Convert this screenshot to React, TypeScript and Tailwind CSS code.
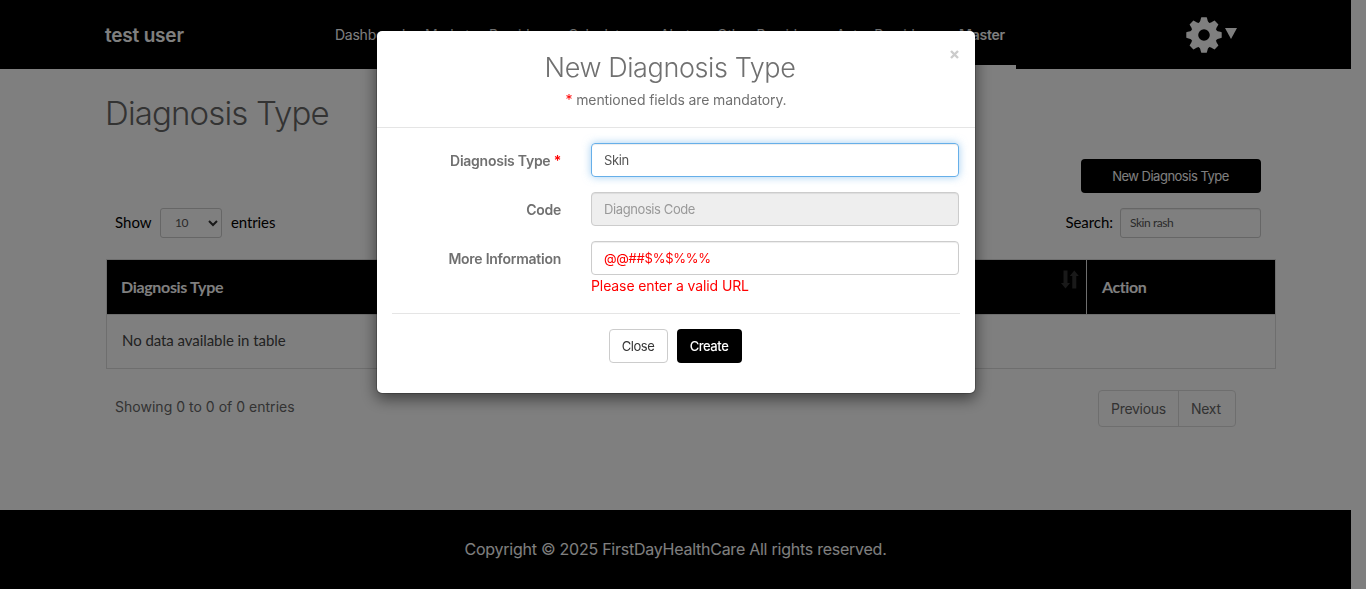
import React from 'react';

const navItems = [
  { label: 'Dashboard', width: 'w-[90px]' },
  { label: 'Market', width: 'w-[64px]' },
  { label: 'Providers', width: 'w-[79px]' },
  { label: 'Calculator', width: 'w-[92px]' },
  { label: 'Alerts', width: 'w-[57px]' },
  { label: 'Other Providers', width: 'w-[119px]' },
  { label: 'Actor Providers', width: 'w-[112px]' },
];

const teeth = [0, 45, 90, 135, 180, 225, 270, 315];

function Gear() {
  return (
    <svg viewBox="-18 -18 36 36" className="size-9 fill-white">
      <path fillRule="evenodd" d="M-13.2 0a13.2 13.2 0 1 0 26.4 0a13.2 13.2 0 1 0 -26.4 0zM-5.8 0a5.8 5.8 0 1 1 11.6 0a5.8 5.8 0 1 1 -11.6 0z" />
      {teeth.map((angle) => (
        <path key={angle} transform={`rotate(${angle})`} d="M-5 -12Q-3.6 -13.2 -3.2 -16.2L-2.7 -17.7H2.7L3.2 -16.2Q3.6 -13.2 5 -12z" />
      ))}
    </svg>
  );
}

function NavBar() {
  return (
    <header className="flex h-[69px] items-start bg-black pl-[105px] text-white">
      <div className="w-[230px] pt-[22px] text-[19px] leading-7 font-semibold tracking-[-0.2px]">test user</div>
      <nav className="flex text-[14px] font-normal tracking-[-0.25px]">
        {navItems.map((item) => (
          <a key={item.label} className={`${item.width} pt-[25px] leading-5 whitespace-nowrap`}>{item.label}</a>
        ))}
        <a className="h-[69px] w-[68px] border-b-4 border-white pt-[25px] pl-[11px] leading-5 font-semibold tracking-[-0.25px]">Master</a>
      </nav>
      <div className="ml-auto flex pt-[17px] pr-[114px]">
        <Gear />
        <svg viewBox="0 0 12 11" className="mt-[11px] ml-[3px] h-[11px] w-3 fill-white">
          <path d="M0 0H12L6 11z" />
        </svg>
      </div>
    </header>
  );
}

function SortIcon() {
  return (
    <svg viewBox="0 0 18 19" className="h-[19px] w-[18px] fill-[#333]">
      <path d="M2.5 0.5H6.5V13H9L4.5 18.5L0 13H2.5z" />
      <path d="M11.3 18.5H15.3V6H17.8L13.3 0.5L8.8 6H11.3z" />
    </svg>
  );
}

function TableArea() {
  return (
    <main className="flex h-[441px] flex-col text-[#666]">
      <h1 className="mt-[23px] pl-[105px] text-[33px] leading-[42px] font-light tracking-[-0.85px]">Diagnosis Type</h1>
      <div className="mt-[25px] flex justify-end pr-[90px]">
        <button className="h-[34px] w-[180px] rounded bg-black pt-[2px] pr-px text-[13px] font-normal tracking-[-0.5px] text-white">New Diagnosis Type</button>
      </div>
      <div className="mt-[15px] flex h-[30px] items-center pr-[90px] pl-[115px] font-[Lato,sans-serif] text-[15px] text-black">
        <span className="w-[45px] pb-[2px]">Show</span>
        <span className="flex h-[30px] w-[62px] items-center justify-between rounded-[3px] border border-[#ccc] pr-[3px] pl-[14px] text-[12px] tracking-[-0.5px] text-[#555]">
          10
          <svg viewBox="0 0 10 7" className="h-[7px] w-[10px] fill-none stroke-[#333] stroke-2">
            <path d="M1 1L5 5L9 1" />
          </svg>
        </span>
        <span className="ml-[9px] pb-[2px] tracking-[-0.1px]">entries</span>
        <span className="mr-[7px] ml-auto pb-[2px] tracking-[-0.05px]">Search:</span>
        <input defaultValue="Skin rash" className="h-[30px] w-[141px] rounded-[3px] border border-[#ccc] px-[9px] pb-[2px] text-[12px] tracking-[-0.45px] text-[#555] shadow-[inset_0_1px_1px_rgba(0,0,0,0.075)]" />
      </div>
      <div className="mt-[21px] ml-[106px] h-[110px] w-[1170px] border border-[#ddd] font-[Lato,sans-serif]">
        <div className="flex h-[54px] bg-black text-[16px] font-bold text-white">
          <div className="flex w-[980px] justify-between border-r border-[#ddd] pt-[10px] pr-[7px] pl-[14px]">
            <span className="pt-[5px] tracking-[-0.33px]">Diagnosis Type</span>
            <SortIcon />
          </div>
          <div className="pt-[15px] pl-[15px] tracking-[-0.4px]">Action</div>
        </div>
        <div className="border-t border-[#ddd] pt-[14px] pl-[15px] text-[15px] leading-[22px] tracking-[-0.06px] text-[#444]">No data available in table</div>
      </div>
      <div className="mt-[21px] flex justify-between pr-[115px] pl-[115px] text-[14px] font-normal">
        <span className="mt-[7px] leading-5 tracking-[0.02px]">Showing 0 to 0 of 0 entries</span>
        <div className="flex h-[37px] items-center rounded border border-[#ddd] tracking-[-0.3px]">
          <span className="flex h-full w-[80px] items-center border-r border-[#ddd] pl-3">Previous</span>
          <span className="w-[56px] pl-3">Next</span>
        </div>
      </div>
    </main>
  );
}

function Field({ label, children }: { label: React.ReactNode; children: React.ReactNode }) {
  return (
    <div className="mb-[15px] flex">
      <label className="w-[184px] pt-[8px] text-right text-[14px] leading-5 font-semibold tracking-[-0.25px]">{label}</label>
      <div className="ml-[30px] w-[368px]">{children}</div>
    </div>
  );
}

function DiagnosisDialog() {
  return (
    <section className="relative h-[364px] w-[600px] rounded-md border border-black/20 bg-white bg-clip-padding text-[#707070] shadow-[0_5px_15px_rgba(0,0,0,0.5)]">
      <button className="absolute top-[13px] right-[16px] text-[#ccc]" aria-label="Close">
        <svg viewBox="0 0 9 9" className="mt-[6px] size-[9px] fill-none stroke-current stroke-[2.4]">
          <path d="M1 1L8 8M8 1L1 8" />
        </svg>
      </button>
      <div className="h-[97px] border-b border-[#e5e5e5] pt-[19px] text-center">
        <h2 className="pr-[12px] text-[27px] leading-9 font-light tracking-[-0.4px]">New Diagnosis Type</h2>
        <p className="mt-[4px] text-[14px] leading-5 font-normal tracking-[-0.1px]"><span className="text-[#f00]">*</span> mentioned fields are mandatory.</p>
      </div>
      <form className="pt-[15px]">
        <Field label={<>Diagnosis Type <span className="text-[#f00]">*</span></>}>
          <input defaultValue="Skin" className="h-[34px] w-full rounded border border-[#66afe9] px-3 text-[13px] font-normal tracking-[-0.35px] text-[#555] shadow-[inset_0_1px_1px_rgba(0,0,0,0.075),0_0_8px_rgba(102,175,233,0.6)] outline-none" />
        </Field>
        <Field label="Code">
          <input disabled placeholder="Diagnosis Code" className="h-[34px] w-full rounded border border-[#ccc] bg-[#eee] px-3 text-[13px] font-normal tracking-[-0.4px] shadow-[inset_0_1px_1px_rgba(0,0,0,0.075)] placeholder:text-[#999]" />
        </Field>
        <Field label="More Information">
          <input defaultValue="@@##$%$%%%" className="h-[34px] w-full rounded border border-[#ccc] px-3 text-[13px] font-normal tracking-[-0.25px] text-[#f00] shadow-[inset_0_1px_1px_rgba(0,0,0,0.075)] outline-none" />
          <p className="h-[23px] text-[14px] leading-[21px] font-normal tracking-[-0.1px] text-[#f00]">Please enter a valid URL</p>
        </Field>
        <div className="mx-[15px] flex justify-center gap-[9px] border-t border-[#e5e5e5] pt-[15px] pr-[2px]">
          <button type="button" className="h-[34px] w-[59px] rounded border border-[#ccc] pt-[2px] text-[13px] font-normal tracking-[-0.45px] text-[#333]">Close</button>
          <button type="button" className="h-[34px] w-[65px] rounded bg-black pt-[2px] text-[13px] font-medium tracking-[-0.45px] text-white">Create</button>
        </div>
      </form>
    </section>
  );
}

export default function App() {
  return (
    <div className="h-[589px] overflow-hidden bg-white pr-[15px] font-[Inter,sans-serif]">
      <NavBar />
      <TableArea />
      <footer className="flex h-[79px] justify-center bg-black pt-[27px] text-[16px] leading-6 tracking-[-0.25px] text-white">
        Copyright © 2025 FirstDayHealthCare All rights reserved.
      </footer>
      <div className="fixed inset-0 flex items-start justify-center bg-black/50 pt-[30px] pr-[14px]">
        <DiagnosisDialog />
      </div>
    </div>
  );
}
